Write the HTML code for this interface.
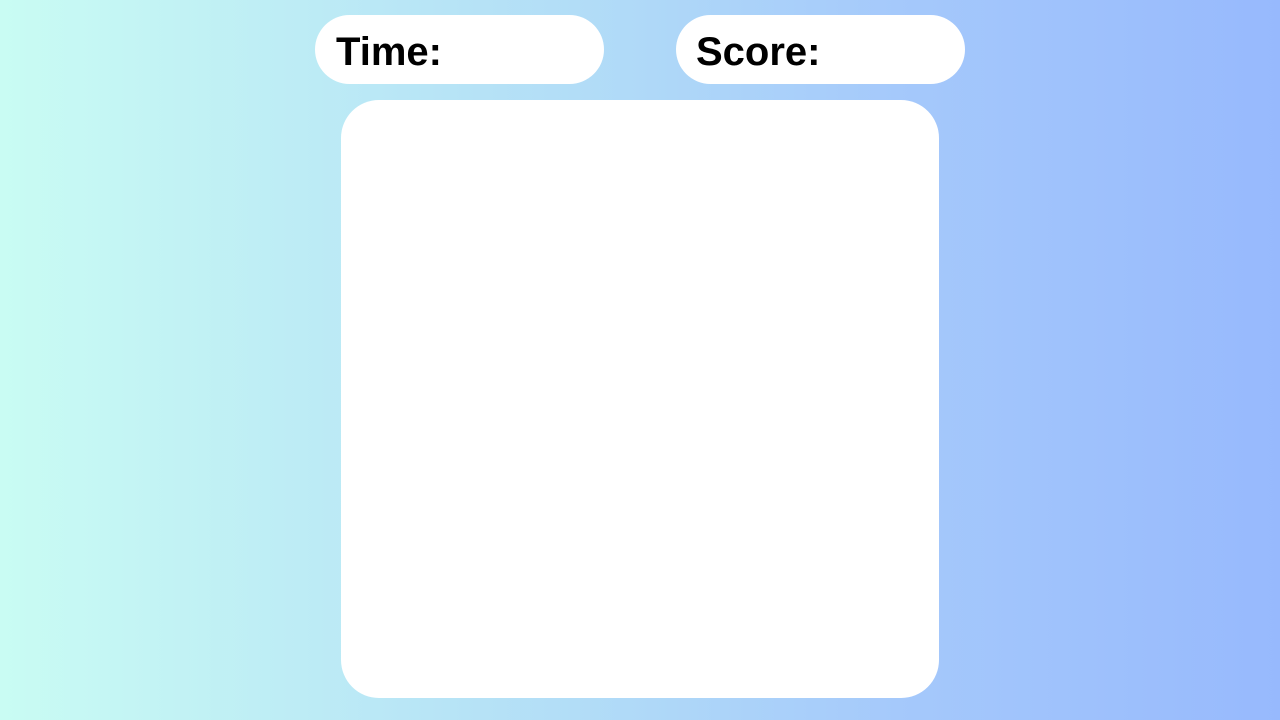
<!DOCTYPE html>
<html><head><style>
html,body{margin:0;padding:0;width:1280px;height:720px;overflow:hidden}
body{background:linear-gradient(to right,#c9fcf3,#b2ddf7 45%,#a5c9fb 70%,#97b9fd);position:relative;font-family:"Liberation Sans",sans-serif}
.pill{position:absolute;top:15px;height:69px;background:#fff;border-radius:35px}
.pill span{position:absolute;left:21px;top:13px;font-size:40px;font-weight:bold;color:#000;line-height:48px}
.main{position:absolute;left:341px;top:100px;width:598px;height:598px;background:#fff;border-radius:38px}
</style></head><body>
<div class="pill" style="left:315px;width:289px"><span>Time:</span></div>
<div class="pill" style="left:676px;width:289px"><span style="left:20px">Score:</span></div>
<div class="main"></div>
</body></html>
